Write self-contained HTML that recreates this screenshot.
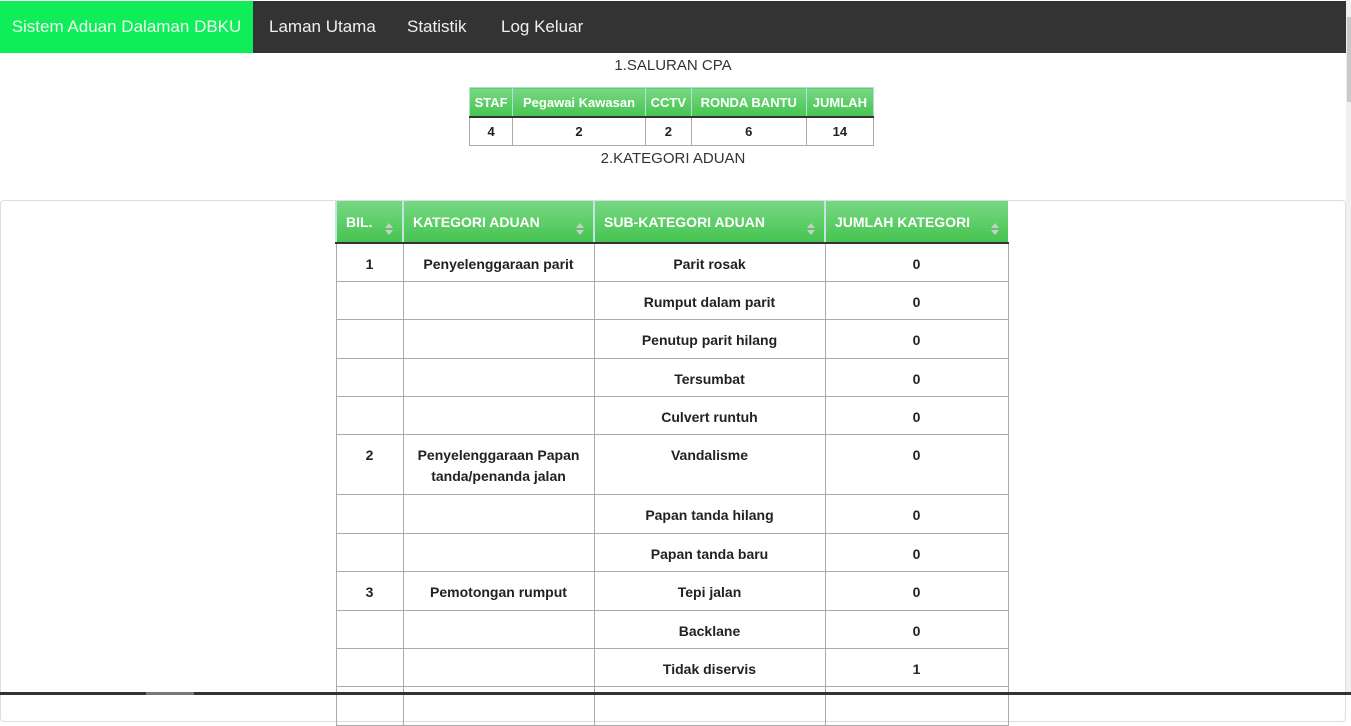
<!DOCTYPE html>
<html><head><style>
body{margin:0;width:1351px;height:695px;overflow:hidden;background:#fff;font-family:"Liberation Sans",Arial,sans-serif;position:relative}
.nav{position:absolute;left:0;top:1px;width:1346px;height:52px;background:#333}
.brand{position:absolute;left:0;top:0;width:253px;height:52px;background:#0fee58;color:#eefaf0;font-size:17px;line-height:52px;text-align:center}
.nav a{position:absolute;top:0;line-height:52px;font-size:17px;color:#f0f0f0}
.sb{position:absolute;left:1346px;top:0;width:5px;height:695px;background:#f0f0f0;z-index:5}
.th{position:absolute;left:1px;top:17px;width:4px;height:85px;background:#c8c8c8}
.title{position:absolute;width:1346px;text-align:center;font-size:15px;color:#333}
table{border-collapse:collapse;position:absolute}
.small{left:469px;top:87px;width:405px;font-size:13px;font-weight:bold}
.small th{height:28px;background:linear-gradient(#78d884,#46c450);color:#fff;border:1px solid #b5dcd9;border-bottom:2px solid #333;padding:0 2px;white-space:nowrap}
.small td{height:25px;border:1px solid #aaa;text-align:center;color:#222}
.panel{position:absolute;left:0;top:200px;width:1344px;height:520px;border:1px solid #ddd;border-radius:4px}
.big{left:335px;top:201px;width:672px;font-size:14px;font-weight:bold;color:#222;table-layout:fixed}
.big th{height:40px;box-sizing:border-box;background:linear-gradient(#78d884,#46c450);color:#fff;text-align:left;padding:0 9px;border-left:2px solid #c4e3e3;border-bottom:2px solid #333;position:relative}
.big th:after{content:"";position:absolute;right:9px;top:22px;border:4px solid transparent;border-bottom:5px solid #ccc;border-top:0}
.big th:before{content:"";position:absolute;right:9px;top:29px;border:4px solid transparent;border-top:5px solid #ccc;border-bottom:0}
.big tr{height:38.4px}
.big td{border:1px solid #aaa;text-align:center;vertical-align:top;padding:10px 6px 0;line-height:21px;box-sizing:border-box;overflow:hidden}
.bot{position:absolute;left:0;top:692px;width:1351px;height:3px;background:#333;z-index:6}
.bot i{position:absolute;left:146px;width:48px;height:3px;background:#777}
</style></head><body>
<div class="nav"><div class="brand">Sistem Aduan Dalaman DBKU</div>
<a style="left:269px">Laman Utama</a><a style="left:407px">Statistik</a><a style="left:501px">Log Keluar</a></div>
<div class="sb"><div class="th"></div></div>
<div class="title" style="top:57px">1.SALURAN CPA</div>
<table class="small"><tr><th>STAF</th><th>Pegawai Kawasan</th><th>CCTV</th><th>RONDA BANTU</th><th>JUMLAH</th></tr>
<tr><td>4</td><td>2</td><td>2</td><td>6</td><td>14</td></tr></table>
<div class="title" style="top:150px">2.KATEGORI ADUAN</div>
<div class="panel"></div>
<table class="big">
<colgroup><col style="width:67px"><col style="width:191px"><col style="width:231px"><col style="width:183px"></colgroup>
<tr style="height:42px"><th>BIL.</th><th>KATEGORI ADUAN</th><th>SUB-KATEGORI ADUAN</th><th>JUMLAH KATEGORI</th></tr>
<tr><td>1</td><td>Penyelenggaraan parit</td><td>Parit rosak</td><td>0</td></tr>
<tr><td></td><td></td><td>Rumput dalam parit</td><td>0</td></tr>
<tr><td></td><td></td><td>Penutup parit hilang</td><td>0</td></tr>
<tr><td></td><td></td><td>Tersumbat</td><td>0</td></tr>
<tr><td></td><td></td><td>Culvert runtuh</td><td>0</td></tr>
<tr style="height:60px"><td>2</td><td>Penyelenggaraan Papan tanda/penanda jalan</td><td>Vandalisme</td><td>0</td></tr>
<tr><td></td><td></td><td>Papan tanda hilang</td><td>0</td></tr>
<tr><td></td><td></td><td>Papan tanda baru</td><td>0</td></tr>
<tr><td>3</td><td>Pemotongan rumput</td><td>Tepi jalan</td><td>0</td></tr>
<tr><td></td><td></td><td>Backlane</td><td>0</td></tr>
<tr><td></td><td></td><td>Tidak diservis</td><td>1</td></tr>
<tr><td></td><td></td><td></td><td></td></tr>
</table>
<div class="bot"><i></i></div>
</body></html>
